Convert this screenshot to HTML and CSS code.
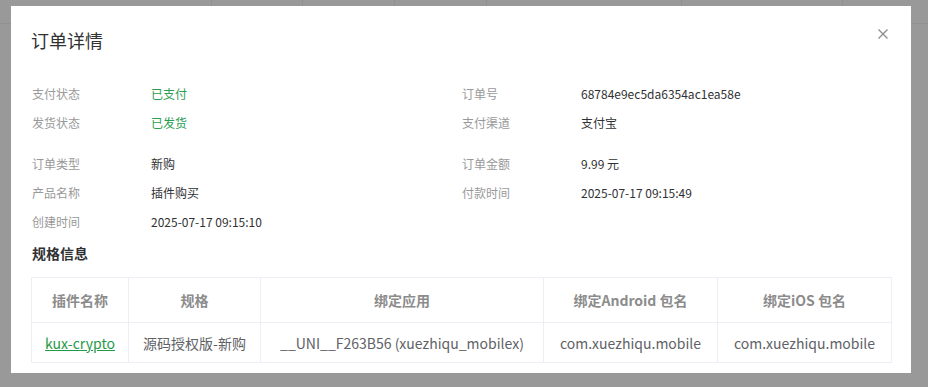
FILE: index.html
```html
<!DOCTYPE html>
<html lang="zh-CN">
<head>
<meta charset="utf-8">
<title>订单详情</title>
<link rel="stylesheet" href="styles.css">
</head>
<body>
<div class="page-bg">
  <div class="bg-lines">
    <span></span><span></span><span></span><span></span><span></span><span></span><span></span>
  </div>
</div>
<div class="overlay">
  <div class="modal">
    <div class="modal-header">
      <h2 class="modal-title">订单详情</h2>
      <button class="close-btn" aria-label="关闭">
        <svg width="10" height="10" viewBox="0 0 10 10"><path d="M0.5 0.5L9.5 9.5M9.5 0.5L0.5 9.5" stroke="#8c8c8c" stroke-width="1.3" fill="none"/></svg>
      </button>
    </div>
    <div class="info">
      <div class="info-group">
        <div class="info-row"><span class="label">支付状态</span><span class="value green">已支付</span></div>
        <div class="info-row"><span class="label">订单号</span><span class="value">68784e9ec5da6354ac1ea58e</span></div>
        <div class="info-row"><span class="label">发货状态</span><span class="value green">已发货</span></div>
        <div class="info-row"><span class="label">支付渠道</span><span class="value">支付宝</span></div>
      </div>
      <div class="info-group">
        <div class="info-row"><span class="label">订单类型</span><span class="value">新购</span></div>
        <div class="info-row"><span class="label">订单金额</span><span class="value">9.99 元</span></div>
        <div class="info-row"><span class="label">产品名称</span><span class="value">插件购买</span></div>
        <div class="info-row"><span class="label">付款时间</span><span class="value">2025-07-17 09:15:49</span></div>
        <div class="info-row"><span class="label">创建时间</span><span class="value">2025-07-17 09:15:10</span></div>
      </div>
    </div>
    <h3 class="section-title">规格信息</h3>
    <table class="spec-table">
      <thead>
        <tr>
          <th class="c1">插件名称</th>
          <th class="c2">规格</th>
          <th class="c3">绑定应用</th>
          <th class="c4">绑定Android 包名</th>
          <th class="c5">绑定iOS 包名</th>
        </tr>
      </thead>
      <tbody>
        <tr>
          <td><a class="link" href="#">kux-crypto</a></td>
          <td>源码授权版-新购</td>
          <td>__UNI__F263B56 (xuezhiqu_mobilex)</td>
          <td>com.xuezhiqu.mobile</td>
          <td>com.xuezhiqu.mobile</td>
        </tr>
      </tbody>
    </table>
  </div>
</div>
</body>
</html>
```

FILE: styles.css
```css
* { box-sizing: border-box; }
html, body {
  margin: 0;
  padding: 0;
  width: 928px;
  height: 387px;
  overflow: hidden;
  font-family: "Noto Sans CJK SC", "Noto Sans", sans-serif;
}
.page-bg {
  width: 928px;
  height: 387px;
  background: #fff;
}
.bg-lines {
  display: flex;
  height: 24px;
  border-bottom: 1px solid #f2f2f2;
}
.bg-lines span {
  border-right: 1px solid #f0f0f0;
}
.bg-lines span:nth-child(1) { width: 212px; }
.bg-lines span:nth-child(2) { width: 91px; }
.bg-lines span:nth-child(3) { width: 92px; }
.bg-lines span:nth-child(4) { width: 92px; }
.bg-lines span:nth-child(5) { width: 195px; }
.bg-lines span:nth-child(6) { width: 161px; }
.bg-lines span:nth-child(7) { flex: 1; border-right: none; }

.overlay {
  position: fixed;
  inset: 0;
  background: rgba(0, 0, 0, 0.4);
  padding: 6px 0 0 11px;
}
.modal {
  width: 900px;
  height: 367px;
  background: #fff;
  padding: 0 20px 11px;
}
.modal-header {
  display: flex;
  justify-content: space-between;
  align-items: flex-start;
  padding-top: 22px;
  height: 47px;
}
.modal-title {
  margin: 0;
  font-size: 18px;
  line-height: 24px;
  font-weight: 400;
  color: #303133;
}
.close-btn {
  border: 0;
  background: none;
  padding: 0;
  margin: 1px 3px 0 0;
  width: 10px;
  height: 10px;
  display: flex;
}
.info {
  margin-top: 26px;
  display: flex;
  flex-direction: column;
  gap: 12px;
}
.info-group {
  display: grid;
  grid-template-columns: 430px 430px;
}
.info-row {
  display: flex;
  height: 29px;
  align-items: center;
  font-size: 12px;
}
.label {
  width: 120px;
  padding-left: 1px;
  color: #999;
}
.value {
  color: #303133;
}
.value.green { color: #2a9d50; }
.section-title {
  margin: 6px 0 0;
  font-size: 14px;
  line-height: 22px;
  font-weight: 700;
  color: #303133;
  padding-left: 1px;
}
.spec-table {
  margin-top: 13px;
  width: 860px;
  border-collapse: collapse;
  table-layout: fixed;
  font-size: 14px;
}
.spec-table th, .spec-table td {
  border: 1px solid #ebeef5;
  text-align: center;
  padding: 0;
  white-space: nowrap;
}
.spec-table th {
  height: 45px;
  font-weight: 700;
  color: #8c8c8c;
}
.spec-table td {
  height: 40px;
  color: #606266;
}
.c1 { width: 97px; }
.c2 { width: 132px; }
.c3 { width: 283px; }
.c4 { width: 174px; }
.c5 { width: 174px; }
.link {
  color: #1f9a47;
  text-decoration: underline;
}
```
